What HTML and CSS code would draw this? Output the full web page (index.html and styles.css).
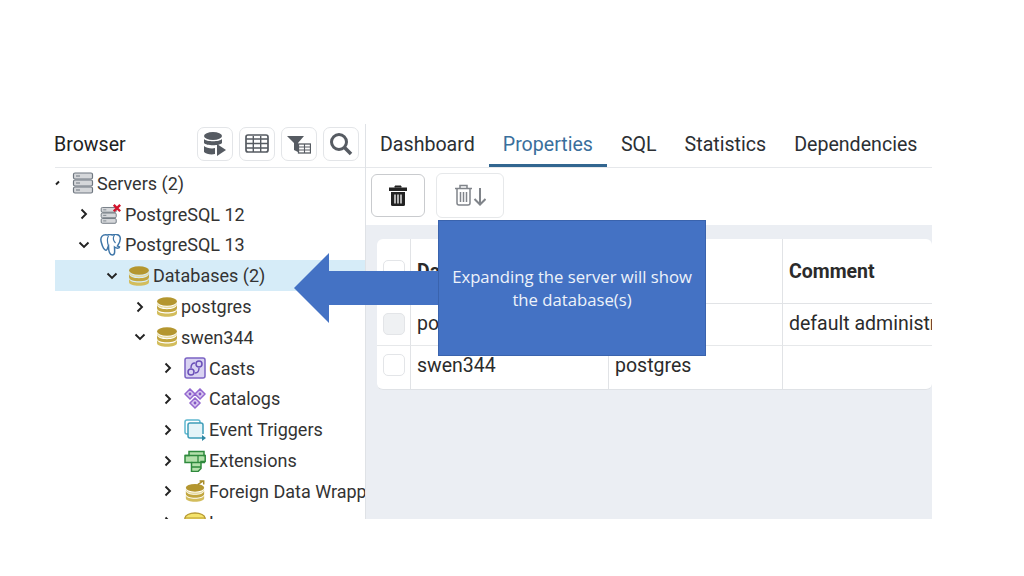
FILE: index.html
```html
<!DOCTYPE html>
<html lang="en">
<head>
<meta charset="utf-8">
<title>pgAdmin browser</title>
<link rel="stylesheet" href="styles.css">
</head>
<body>
<svg class="defs" width="0" height="0" aria-hidden="true">
  <defs>
    <symbol id="db" viewBox="0 0 22 20">
      <ellipse cx="11" cy="4.500" rx="10" ry="4.200" fill="#b4962f"/>
      <path d="M1 5c0 3 4.500 4.700 10 4.700S21 8 21 5v1.500c0 3-4.500 4.700-10 4.700S1 9.500 1 6.500z" fill="#e8dca0"/>
      <path d="M1 7.500c0 3 4.500 4.700 10 4.700s10-1.700 10-4.700v3.500c0 3-4.500 4.300-10 4.300S1 14 1 11z" fill="#c2a63f"/>
      <path d="M1 13c1 2.500 5 3.500 10 3.500s9-1 10-3.500v3c0 2.500-4.500 3.800-10 3.800S1 18.500 1 16z" fill="#d3bd5c"/>
    </symbol>
    <symbol id="srv" viewBox="0 0 22 22">
      <g fill="#d5d7da" stroke="#6f7780" stroke-width="1.200">
        <rect x="1.500" y="1" width="19" height="6" rx="1.500"/>
        <rect x="1.500" y="8" width="19" height="6" rx="1.500"/>
        <rect x="1.500" y="15" width="19" height="6" rx="1.500"/>
      </g>
      <path d="M4 4h4M4 11h4M4 18h4" stroke="#6f7780" stroke-width="1"/>
    </symbol>
    <symbol id="chev-r" viewBox="0 0 12 12"><path d="M3.500 1.500 8 6l-4.500 4.500" fill="none" stroke="#222" stroke-width="1.900"/></symbol>
    <symbol id="chev-d" viewBox="0 0 12 12"><path d="M1.500 3.500 6 8l4.500-4.500" fill="none" stroke="#222" stroke-width="1.900"/></symbol>
  </defs>
</svg>
<main class="slide">
  <div class="app">
    <section class="browser">
      <header class="browser-head">
        <h2 class="browser-title">Browser</h2>
        <div class="tools">
          <button class="tool" type="button" aria-label="Query tool">
            <svg width="24" height="26" viewBox="0 0 24 26"><ellipse cx="10" cy="5" rx="9" ry="4" fill="#565b62"/><path d="M1 8c2 3 16 3 18 0v4c-2 3-16 3-18 0zM1 15c2 2 8 3 11 2v6c-4 1-9 0-11-2z" fill="#565b62"/><path d="M14 13l9 6-9 6z" fill="#565b62"/></svg>
          </button>
          <button class="tool" type="button" aria-label="Table">
            <svg width="24" height="19" viewBox="0 0 24 19"><rect x="1" y="1" width="22" height="17" rx="2" fill="none" stroke="#565b62" stroke-width="1.700"/><path d="M1 5h22M1 9.500h22M1 14h22M8.300 2v16M15.700 2v16" stroke="#565b62" stroke-width="1.400"/></svg>
          </button>
          <button class="tool" type="button" aria-label="Filter">
            <svg width="24" height="20" viewBox="0 0 24 20"><path d="M0 2h17l-6 7v9l-4-2V9z" fill="#565b62"/><rect x="11.500" y="10" width="12" height="9" fill="#fff" stroke="#565b62" stroke-width="1.300"/><path d="M11.500 13h12M11.500 16h12M17.500 10v9" stroke="#565b62" stroke-width="1.100"/></svg>
          </button>
          <button class="tool" type="button" aria-label="Search">
            <svg width="24" height="24" viewBox="0 0 24 24"><circle cx="10" cy="10" r="7.500" fill="none" stroke="#565b62" stroke-width="3"/><path d="M15.500 15.500 22 22" stroke="#565b62" stroke-width="3.600"/></svg>
          </button>
        </div>
      </header>
      <ul class="tree">
        <li class="row l0"><svg class="chev" viewBox="0 0 12 12"><path d="M4 7.500 7 4.500" fill="none" stroke="#222" stroke-width="1.900"/></svg><svg class="ico"><use href="#srv"/></svg><span>Servers (2)</span></li>
        <li class="row l1"><svg class="chev"><use href="#chev-r"/></svg>
          <svg class="ico" viewBox="0 0 24 22"><use href="#srv" width="19" height="19" y="3"/><path d="M15 1l7 7M22 1l-7 7" stroke="#d3142c" stroke-width="2.600"/></svg><span>PostgreSQL 12</span></li>
        <li class="row l1"><svg class="chev"><use href="#chev-d"/></svg>
          <svg class="ico" viewBox="1 1 21 22"><path d="M8 2C3 1 0 4 2 10c1 4 3 8 5 7 1 0 1-3 2-4 0 4 1 9 4 9 3 0 2-5 2-8 3 2 5 1 5 0l-2-1c2-3 4-7 2-10-2-2-5-2-7-1-2-1-3-1-5 0z" fill="#fff" stroke="#3f76a8" stroke-width="1.500"/><path d="M9 3c-2 3-1 7 0 10M15 2c-2 3-1 6 1 8" fill="none" stroke="#3f76a8" stroke-width="1.200"/></svg><span>PostgreSQL 13</span></li>
        <li class="row l2 selected"><svg class="chev"><use href="#chev-d"/></svg><svg class="ico"><use href="#db"/></svg><span>Databases (2)</span></li>
        <li class="row l3"><svg class="chev"><use href="#chev-r"/></svg><svg class="ico"><use href="#db"/></svg><span>postgres</span></li>
        <li class="row l3"><svg class="chev"><use href="#chev-d"/></svg><svg class="ico"><use href="#db"/></svg><span>swen344</span></li>
        <li class="row l4"><svg class="chev"><use href="#chev-r"/></svg>
          <svg class="ico" viewBox="0 0 22 22"><rect x="1" y="1" width="20" height="20" rx="2" fill="#d9d3f2" stroke="#7b63c4" stroke-width="1.500"/><circle cx="7" cy="15" r="3" fill="none" stroke="#6a50b8" stroke-width="1.500"/><circle cx="15" cy="7" r="3" fill="none" stroke="#6a50b8" stroke-width="1.500"/><path d="M7 11c0-4 2-5 4-5M15 11c0 4-2 5-4 5" fill="none" stroke="#6a50b8" stroke-width="1.400"/></svg><span>Casts</span></li>
        <li class="row l4"><svg class="chev"><use href="#chev-r"/></svg>
          <svg class="ico" viewBox="0 0 22 22"><g fill="#d9c8f0" stroke="#9467cf" stroke-width="1.500"><path d="M6 1l5 5-5 5-5-5zM16 1l5 5-5 5-5-5zM11 10l5 5-5 5-5-5z"/></g><g fill="#8356c4"><circle cx="6" cy="6" r="1.400"/><circle cx="16" cy="6" r="1.400"/><circle cx="11" cy="15" r="1.400"/></g></svg><span>Catalogs</span></li>
        <li class="row l4"><svg class="chev"><use href="#chev-r"/></svg>
          <svg class="ico" viewBox="0 0 22 22"><path d="M4 15H3a2 2 0 0 1-2-2V3a2 2 0 0 1 2-2h11a2 2 0 0 1 2 2v1" fill="none" stroke="#5fb8cf" stroke-width="1.500"/><path d="M19 15V6a2 2 0 0 0-2-2H6a2 2 0 0 0-2 2v11a2 2 0 0 0 2 2h12" fill="#e4f4f8" stroke="#3e9db8" stroke-width="1.500"/><path d="M18 16l4 3-4 3z" fill="#2d87a3"/></svg><span>Event Triggers</span></li>
        <li class="row l4"><svg class="chev"><use href="#chev-r"/></svg>
          <svg class="ico" viewBox="0 0 22 22"><path d="M5 1.500h15v4h1.200v6H17v7l-3 3H7.500v-9H1v-7h4z" fill="#b4e0ab" stroke="#2f8a3d" stroke-width="1.500"/><path d="M1 5.500h20M7.500 12.500H21M7.500 17h9.500M14 5.500v7" fill="none" stroke="#2f8a3d" stroke-width="1.300"/></svg><span>Extensions</span></li>
        <li class="row l4"><svg class="chev"><use href="#chev-r"/></svg>
          <svg class="ico" viewBox="0 0 22 24"><use href="#db" y="4" width="22" height="20"/><path d="M14 5l6-4M16 1h4.500v4" fill="none" stroke="#a88c2a" stroke-width="1.600"/></svg><span class="clip">Foreign Data Wrappers</span></li>
        <li class="row l4"><svg class="chev"><use href="#chev-r"/></svg>
          <svg class="ico" viewBox="0 0 22 20"><ellipse cx="11" cy="6" rx="10" ry="5" fill="#f4e36b" stroke="#b79a35" stroke-width="1.300"/><rect x="1" y="6" width="20" height="12" fill="#f4e36b" stroke="#b79a35"/></svg><span>Languages</span></li>
      </ul>
    </section>
    <section class="panel">
      <nav class="tabs">
        <a class="tab">Dashboard</a>
        <a class="tab active">Properties</a>
        <a class="tab">SQL</a>
        <a class="tab">Statistics</a>
        <a class="tab">Dependencies</a>
      </nav>
      <div class="toolbar">
        <button class="act act-del" type="button" aria-label="Delete">
          <svg width="18" height="21" viewBox="0 0 18 21"><path d="M6 2.500V1h6v1.500M0 3h18v2.500H0z" fill="#222" stroke="#222" stroke-width="1"/><path d="M2 7h14v12.500a1.500 1.500 0 0 1-1.500 1.500h-11A1.500 1.500 0 0 1 2 19.500z" fill="#222"/><path d="M6 9.500V18.500M9 9.500V18.500M12 9.500V18.500" stroke="#fff" stroke-width="1.300"/></svg>
        </button>
        <button class="act act-drop" type="button" aria-label="Drop cascade">
          <svg width="32" height="22" viewBox="0 0 32 22"><g fill="none" stroke="#80848a" stroke-width="1.500"><path d="M1 4.500h17M6 4V1.500h7V4M3 5v14a2 2 0 0 0 2 2h9a2 2 0 0 0 2-2V5M6.500 8v10M9.500 8v10M12.500 8v10"/><path d="M26 4v16M20.500 15l5.500 5.500 5.500-5.500" stroke-width="2"/></g></svg>
        </button>
      </div>
      <div class="content">
        <table class="grid">
          <colgroup><col class="c-check"><col class="c-name"><col class="c-owner"><col class="c-comment"></colgroup>
          <thead>
            <tr><th><span class="check"></span></th><th>Database</th><th>Owner</th><th>Comment</th></tr>
          </thead>
          <tbody>
            <tr><td><span class="check off"></span></td><td>postgres</td><td>postgres</td><td class="cut">default administrative connection database</td></tr>
            <tr><td><span class="check"></span></td><td>swen344</td><td>postgres</td><td></td></tr>
          </tbody>
        </table>
      </div>
    </section>
  </div>
  <svg class="arrow" viewBox="0 0 150 70" width="150" height="70" aria-hidden="true"><path d="M0 35 35 0v18h115v34H35v18z" fill="#4472c4"/></svg>
  <div class="callout"><p>Expanding the server will show<br>the database(s)</p></div>
</main>
</body>
</html>
```
FILE: styles.css
```css
* { box-sizing: border-box; }
html, body { margin: 0; padding: 0; background: #fff; }
body { font-family: Roboto, "Liberation Sans", sans-serif; color: #222; overflow: hidden; }
.defs { display: block; height: 0; }
.slide { position: relative; width: 1024px; height: 576px; padding: 124px 92px 57px 54px; }
.app { display: flex; width: 878px; height: 395px; overflow: hidden; }

.browser { flex: 0 0 312px; border-right: 1px solid #dfe2e6; overflow: hidden; }
.browser-head { display: flex; align-items: center; justify-content: space-between; height: 44px; border-bottom: 1px solid #e6e8eb; padding: 0 6px 4px 0; margin-left: 1px; }
.browser-title { margin: 2px 0 0 -1px; font-size: 19.600px; font-weight: 400; color: #222; }
.tools { display: flex; gap: 6px; }
.tool { display: flex; align-items: center; justify-content: center; width: 36px; height: 34px; padding: 0; background: #fff; border: 1px solid #e3e5e8; border-radius: 7px; }

.tree { list-style: none; margin: 0; padding: 0; }
.row { display: flex; align-items: center; height: 30.800px; font-size: 18px; color: #333; white-space: nowrap; }
.row span { margin-left: 3px; }
.chev { width: 12px; height: 12px; flex: none; margin-right: 10px; }
.ico { width: 22px; height: 22px; flex: none; }
.l0 { padding-left: 0; }
.l1 { padding-left: 24px; }
.l2 { padding-left: 52px; }
.l3 { padding-left: 80px; }
.l4 { padding-left: 108px; }
.l0 .chev { margin-right: 8px; margin-left: -2px; }
.selected { background: #d6ecf8; margin-left: 1px; padding-left: 51px; }
.clip { overflow: hidden; }

.panel { flex: 1; min-width: 0; display: flex; flex-direction: column; background: #ebeef3; }
.tabs { display: flex; height: 44px; background: #fff; border-bottom: 1px solid #e6e8eb; }
.tab { display: flex; align-items: center; padding: 1px 14px 0; font-size: 19.600px; color: #2b2f33; border-bottom: 3.500px solid transparent; height: 43px; }
.tab.active { color: #3a6f9c; border-bottom-color: #326690; }
.toolbar { display: flex; align-items: center; gap: 11px; height: 57px; padding: 0 0 3px 5px; background: #fff; }
.act { display: flex; align-items: center; justify-content: center; padding: 0; background: #fff; border: 1px solid #d9dbde; border-radius: 6px; }
.act-del { width: 54px; height: 43px; border-color: #c9cbce; }
.act-drop { width: 68px; height: 45px; border-color: #e6e8ea; }
.content { flex: 1; padding: 14px 0 0 11px; overflow: hidden; }

.grid { width: 555px; table-layout: fixed; border-collapse: separate; border-spacing: 0; background: #fff; border-radius: 6px; font-size: 19.500px; color: #2b2b2b; border-bottom: 1px solid #dfe2e6; }
.c-check { width: 34px; }
.c-name { width: 198px; }
.c-owner { width: 174px; }
.c-comment { width: 149px; }
.grid th, .grid td { padding: 0 6px; text-align: left; border-right: 1px solid #e1e3e6; white-space: nowrap; overflow: hidden; }
.grid th:last-child, .grid td:last-child { border-right: 0; }
.grid th { height: 65px; font-weight: 700; font-size: 19.500px; border-bottom: 1px solid #e1e3e6; }
.grid td { height: 42px; padding-bottom: 2px; border-bottom: 1px solid #e6e8ea; }
.grid tbody tr:last-child td { height: 43px; padding-bottom: 5px; border-bottom: 0; }
.check { display: block; width: 22px; height: 22px; border: 1px solid #e3e5e8; border-radius: 5px; background: #fff; }
.check.off { background: #eff1f3; }

.arrow { position: absolute; left: 294px; top: 253px; }
.callout { position: absolute; left: 438px; top: 220px; width: 268px; height: 136px; display: flex; align-items: center; justify-content: center; background: #4472c4; border: 1px solid #3a63ad; }
.callout p { margin: 0; font-family: "Open Sans", sans-serif; font-size: 16.700px; line-height: 23px; color: #eef2fa; text-align: center; }
```
